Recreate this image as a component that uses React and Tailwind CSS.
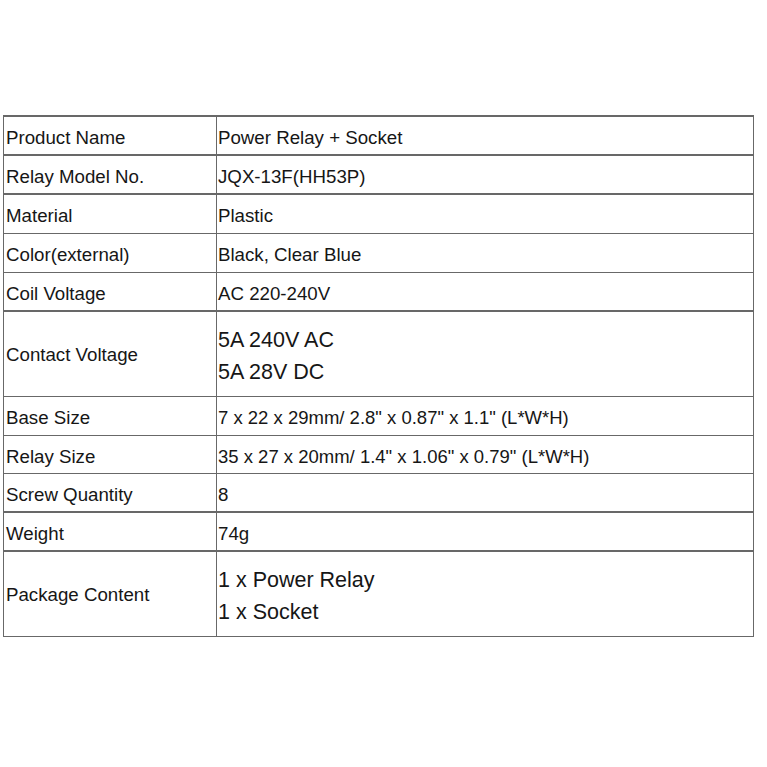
const rows = [
  { label: 'Product Name', value: ['Power Relay + Socket'], h: 'h-[39px]', line: 'border-b-2' },
  { label: 'Relay Model No.', value: ['JQX-13F(HH53P)'], h: 'h-[39px]', line: 'border-b-2' },
  { label: 'Material', value: ['Plastic'], h: 'h-[39px]', line: 'border-b' },
  { label: 'Color(external)', value: ['Black, Clear Blue'], h: 'h-[39px]', line: 'border-b' },
  { label: 'Coil Voltage', value: ['AC 220-240V'], h: 'h-[39px]', line: 'border-b-2' },
  { label: 'Contact Voltage', value: ['5A 240V AC', '5A 28V DC'], h: 'h-[85px]', line: 'border-b', big: true },
  { label: 'Base Size', value: ['7 x 22 x 29mm/ 2.8" x 0.87" x 1.1" (L*W*H)'], h: 'h-[39px]', line: 'border-b', small: true },
  { label: 'Relay Size', value: ['35 x 27 x 20mm/ 1.4" x 1.06" x 0.79" (L*W*H)'], h: 'h-[38px]', line: 'border-b', small: true },
  { label: 'Screw Quantity', value: ['8'], h: 'h-[39px]', line: 'border-b-2' },
  { label: 'Weight', value: ['74g'], h: 'h-[39px]', line: 'border-b-2' },
  { label: 'Package Content', value: ['1 x Power Relay', '1 x Socket'], h: 'h-[85px]', line: 'border-b', big: true },
];

export default function App() {
  return (
    <div className="w-[767px] h-[767px] bg-white pt-[115px] pl-[3px] font-['Liberation_Sans',Arial,sans-serif] text-[#161616]">
      <div className="w-[751px] border-t-2 border-x border-[#686868]">
        {rows.map((row) => (
          <div key={row.label} className={`flex ${row.h} ${row.line} border-[#686868]`}>
            <div
              className={`w-[213px] shrink-0 flex items-center pl-[2px] text-[18.7px] leading-none border-r border-[#686868] ${
                row.big ? 'pt-[2px]' : 'pt-[5px]'
              }`}
            >
              {row.label}
            </div>
            <div
              className={`flex-1 flex flex-col justify-center pl-[1px] ${
                row.big
                  ? 'text-[21.5px] leading-[32px] pt-[4px]'
                  : row.small
                  ? 'text-[18.5px] leading-none pt-[5px]'
                  : 'text-[18.7px] leading-none pt-[5px]'
              }`}
            >
              {row.value.map((v) => (
                <span key={v} className="whitespace-pre">{v}</span>
              ))}
            </div>
          </div>
        ))}
      </div>
    </div>
  );
}
